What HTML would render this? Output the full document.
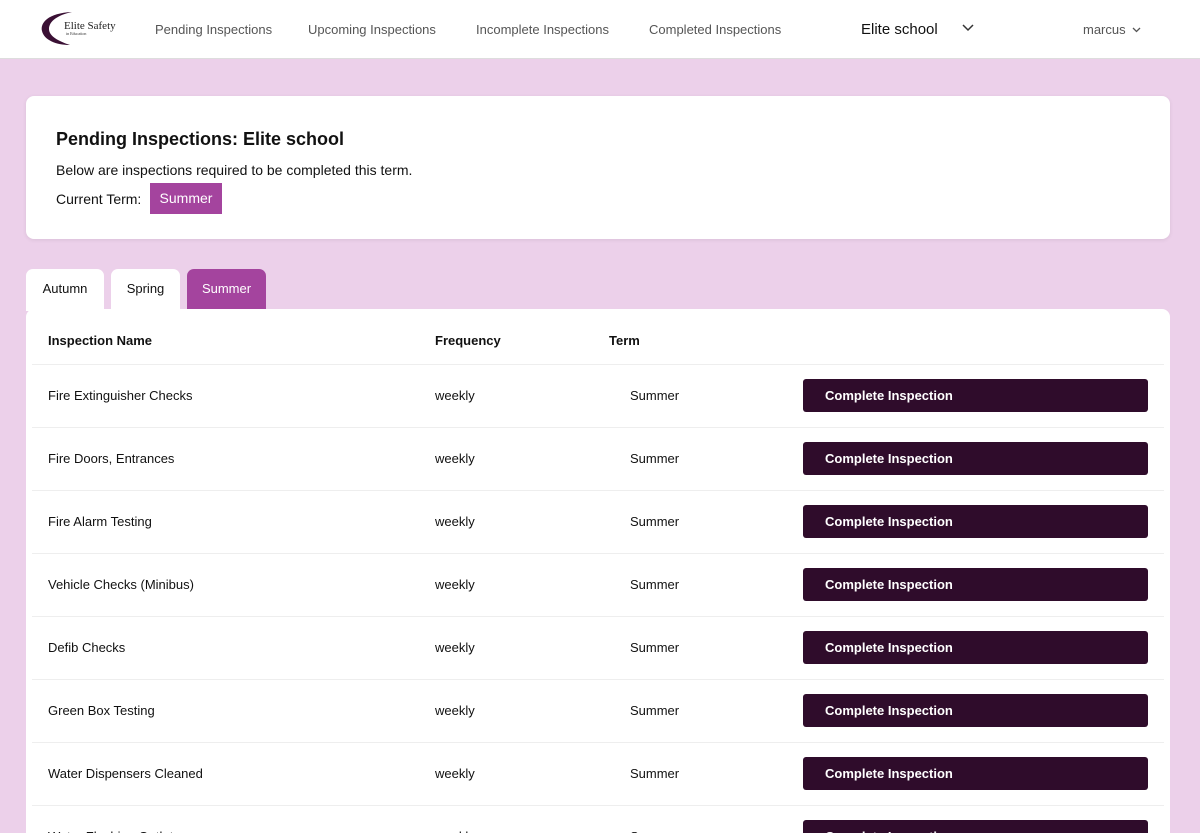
<!DOCTYPE html>
<html style="width:1200px;height:833px;overflow:hidden"><head><meta charset="utf-8"><style>
*{margin:0;padding:0;box-sizing:border-box}
body{width:1200px;height:833px;overflow:hidden;background:#ecd0ea;font-family:"Liberation Sans",sans-serif;color:#111;position:relative}
.hdr{position:absolute;left:0;top:0;width:1200px;height:59px;background:#fff;border-bottom:1px solid #ddd}
.nav{position:absolute;top:22px;font-size:13px;color:#555}
.card{position:absolute;left:26px;top:96px;width:1144px;height:143px;background:#fff;border-radius:8px;box-shadow:0 1px 4px rgba(0,0,0,.08)}
.tab{position:absolute;top:269px;height:42px;background:#fff;border-radius:7px 7px 0 0;font-size:13px;text-align:center;line-height:40px}
.tbl{position:absolute;left:26px;top:309px;width:1144px;height:524px;background:#fff;border-radius:8px 8px 0 0;overflow:hidden}
.row{position:absolute;left:6px;width:1132px;height:63px;border-top:1px solid #eee;font-size:13px}
.row span{position:absolute;top:23px}
.btn{position:absolute;left:771px;top:14px;width:345px;height:33px;background:#2f0c2b;border-radius:3px;color:#fff;font-weight:bold;font-size:13px;padding-left:22px;line-height:33px}
</style></head><body>
<div class="hdr">
<svg style="position:absolute;left:40px;top:10px" width="80" height="38" viewBox="0 0 80 38"><path d="M32 2 C8 3 0 13 2 21 C4 30 16 35 30 35 C18 31 9 26 9 19 C9 11 18 5 32 2Z" fill="#3a1034"/><text x="24" y="19" font-family="Liberation Serif" font-size="11" fill="#222">Elite Safety</text><text x="26" y="25" font-family="Liberation Serif" font-size="4" fill="#333">in Education</text></svg>
<div class="nav" style="left:155px">Pending Inspections</div>
<div class="nav" style="left:308px">Upcoming Inspections</div>
<div class="nav" style="left:476px">Incomplete Inspections</div>
<div class="nav" style="left:649px">Completed Inspections</div>
<div style="position:absolute;left:861px;top:21px;font-size:15px">Elite school</div>
<svg style="position:absolute;left:962px;top:24px" width="12" height="8"><path d="M1 1 L6 6 L11 1" stroke="#333" stroke-width="1.5" fill="none"/></svg>
<div class="nav" style="left:1083px;top:22px;color:#555">marcus</div>
<svg style="position:absolute;left:1132px;top:27px" width="9" height="6"><path d="M1 1 L4.5 4.5 L8 1" stroke="#555" stroke-width="1.3" fill="none"/></svg>
</div>
<div class="card">
<div style="position:absolute;left:30px;top:33px;font-size:18px;font-weight:bold;color:#111">Pending Inspections: Elite school</div>
<div style="position:absolute;left:30px;top:66px;font-size:14px">Below are inspections required to be completed this term.</div>
<div style="position:absolute;left:30px;top:95px;font-size:14px">Current Term:</div>
<div style="position:absolute;left:124px;top:87px;width:72px;height:31px;background:#a4449e;color:#fff;font-size:14px;line-height:31px;text-align:center">Summer</div>
</div>
<div class="tab" style="left:26px;width:78px">Autumn</div>
<div class="tab" style="left:111px;width:69px">Spring</div>
<div class="tab" style="left:187px;width:79px;background:#a4449e;color:#fff">Summer</div>
<div class="tbl">
<div style="position:absolute;left:22px;top:24px;font-size:13px;font-weight:bold">Inspection Name</div>
<div style="position:absolute;left:409px;top:24px;font-size:13px;font-weight:bold">Frequency</div>
<div style="position:absolute;left:583px;top:24px;font-size:13px;font-weight:bold">Term</div>
<div class="row" style="top:55px"><span style="left:16px">Fire Extinguisher Checks</span><span style="left:403px">weekly</span><span style="left:598px">Summer</span><div class="btn">Complete Inspection</div></div>
<div class="row" style="top:118px"><span style="left:16px">Fire Doors, Entrances</span><span style="left:403px">weekly</span><span style="left:598px">Summer</span><div class="btn">Complete Inspection</div></div>
<div class="row" style="top:181px"><span style="left:16px">Fire Alarm Testing</span><span style="left:403px">weekly</span><span style="left:598px">Summer</span><div class="btn">Complete Inspection</div></div>
<div class="row" style="top:244px"><span style="left:16px">Vehicle Checks (Minibus)</span><span style="left:403px">weekly</span><span style="left:598px">Summer</span><div class="btn">Complete Inspection</div></div>
<div class="row" style="top:307px"><span style="left:16px">Defib Checks</span><span style="left:403px">weekly</span><span style="left:598px">Summer</span><div class="btn">Complete Inspection</div></div>
<div class="row" style="top:370px"><span style="left:16px">Green Box Testing</span><span style="left:403px">weekly</span><span style="left:598px">Summer</span><div class="btn">Complete Inspection</div></div>
<div class="row" style="top:433px"><span style="left:16px">Water Dispensers Cleaned</span><span style="left:403px">weekly</span><span style="left:598px">Summer</span><div class="btn">Complete Inspection</div></div>
<div class="row" style="top:496px"><span style="left:16px">Water Flushing Outlets</span><span style="left:403px">weekly</span><span style="left:598px">Summer</span><div class="btn">Complete Inspection</div></div>
</div>
</body></html>
